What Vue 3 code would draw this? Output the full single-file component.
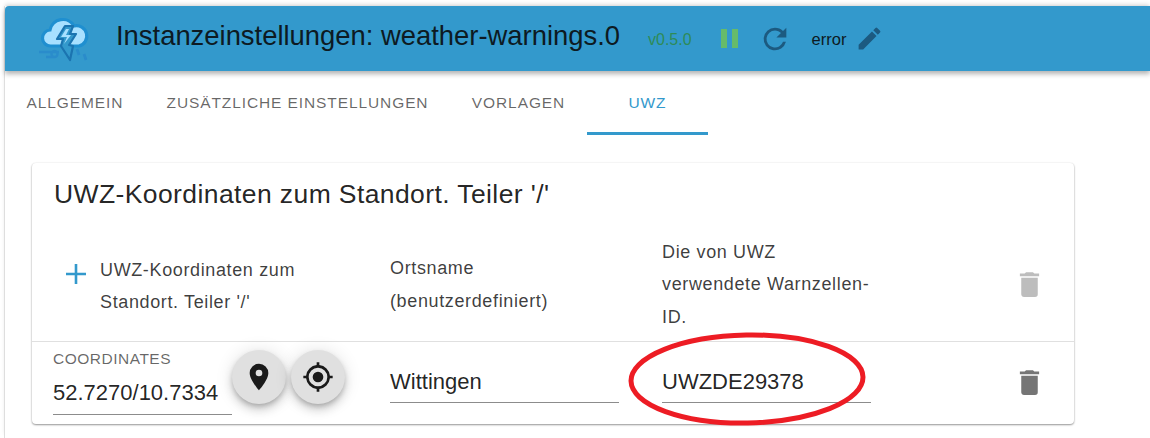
<script setup>
const tabs = [
  { label: 'Allgemein', width: 'tab-a' },
  { label: 'Zusätzliche Einstellungen', width: 'tab-b' },
  { label: 'Vorlagen', width: 'tab-c' },
  { label: 'UWZ', width: 'tab-d', active: true },
]
</script>

<template>
  <div class="page">
    <div class="frame">
      <header class="toolbar">
        <svg class="logo" viewBox="0 0 54 54" width="54" height="54">
          <path d="M12 33a8 8 0 0 1-1-16A13 13 0 0 1 35 13a10 10 0 0 1 5 20z" fill="#a8e0ff" stroke="#1f8fd0" stroke-width="3.2" />
          <path d="M26 13l-8 13h6l-2 7 9 14 3-14-4-1 7-11h-6l3-8z" fill="#3399cc" stroke="#1b74b0" stroke-width="2.2" stroke-linejoin="round" />
          <path d="M27 16l-5 8h6l-3 7 7-9h-5l3-6z" fill="#a8e0ff" />
          <path d="M0 39h20M7 44h9a3 3 0 1 0-1 0" fill="none" stroke="#2a8ccb" stroke-width="2.4" />
          <path d="M38 36l2 6M45 41l2 6" fill="none" stroke="#2a8ccb" stroke-width="2.8" />
        </svg>
        <h1 class="title">Instanzeinstellungen: weather-warnings.0</h1>
        <span class="version">v0.5.0</span>
        <svg class="pause" viewBox="0 0 17 19" width="17" height="19">
          <path d="M0 0h6v19H0zM11 0h6v19h-6z" fill="#66bb6a" />
        </svg>
        <svg class="reload" viewBox="0 0 24 24" width="34" height="34">
          <path d="M17.65 6.35A7.96 7.96 0 0 0 12 4a8 8 0 1 0 7.73 10h-2.08A6 6 0 1 1 12 6c1.66 0 3.14.69 4.22 1.78L13 11h7V4z" fill="#1c5a80" />
        </svg>
        <span class="status">error</span>
        <svg class="edit" viewBox="0 0 24 24" width="29" height="29">
          <path d="M3 17.25V21h3.750L17.810 9.940l-3.750-3.750zM20.710 7.040a1 1 0 0 0 0-1.410l-2.340-2.340a1 1 0 0 0-1.410 0l-1.830 1.830 3.750 3.750z" fill="#1c5a80" />
        </svg>
      </header>

      <nav class="tabs">
        <div v-for="tab in tabs" :key="tab.label" class="tab" :class="[tab.width, { active: tab.active }]">
          {{ tab.label }}
        </div>
      </nav>

      <section class="card">
        <h2 class="card-title">UWZ-Koordinaten zum Standort. Teiler '/'</h2>

        <div class="row head-row">
          <div class="col-one head-one">
            <svg class="plus" viewBox="0 0 20 20" width="20" height="20">
              <path d="M8.700 0h2.600v8.700H20v2.600h-8.700V20H8.700v-8.700H0V8.700h8.700z" fill="#3399cc" />
            </svg>
            <div class="head-text">UWZ-Koordinaten zum Standort. Teiler '/'</div>
          </div>
          <div class="col-two head-text">Ortsname (benutzerdefiniert)</div>
          <div class="col-three head-text">Die von UWZ verwendete Warnzellen-ID.</div>
          <svg class="trash head-trash" viewBox="0 0 24 24" width="33" height="33">
            <path d="M6 19c0 1.1.9 2 2 2h8a2 2 0 0 0 2-2V7H6zM19 4h-3.500l-1-1h-5l-1 1H5v2h14z" fill="#bdbdbd" />
          </svg>
        </div>

        <div class="row data-row">
          <div class="col-one coord-cell">
            <div class="field coord-field">
              <label class="field-label">Coordinates</label>
              <div class="field-value">52.7270/10.7334</div>
            </div>
            <button class="round-btn">
              <svg viewBox="0 0 24 24" width="32" height="32">
                <path d="M12 2a7 7 0 0 0-7 7c0 5.250 7 13 7 13s7-7.750 7-13a7 7 0 0 0-7-7zm0 9.500a2.500 2.500 0 1 1 0-5 2.500 2.500 0 0 1 0 5z" fill="#1a1a1a" />
              </svg>
            </button>
            <button class="round-btn">
              <svg viewBox="0 0 24 24" width="32" height="32">
                <path d="M12 8a4 4 0 1 0 0 8 4 4 0 0 0 0-8zm8.940 3A8.994 8.994 0 0 0 13 3.060V1h-2v2.060A8.994 8.994 0 0 0 3.060 11H1v2h2.060A8.994 8.994 0 0 0 11 20.940V23h2v-2.060A8.994 8.994 0 0 0 20.940 13H23v-2zM12 19a7 7 0 1 1 0-14 7 7 0 0 1 0 14z" fill="#1a1a1a" />
              </svg>
            </button>
          </div>
          <div class="col-two">
            <div class="field plain-field">
              <div class="field-value">Wittingen</div>
            </div>
          </div>
          <div class="col-three">
            <div class="field plain-field">
              <div class="field-value">UWZDE29378</div>
            </div>
          </div>
          <svg class="trash" viewBox="0 0 24 24" width="33" height="33">
            <path d="M6 19c0 1.100.9 2 2 2h8a2 2 0 0 0 2-2V7H6zM19 4h-3.500l-1-1h-5l-1 1H5v2h14z" fill="#757575" />
          </svg>
        </div>
      </section>
    </div>

    <svg class="marker" viewBox="0 0 250 104" width="250" height="104">
      <ellipse cx="125" cy="52" rx="116" ry="44" transform="rotate(-1 125 52)" fill="none" stroke="#ed1c24" stroke-width="5" />
    </svg>
  </div>
</template>

<style scoped>
.page {
  position: relative;
  width: 1150px;
  height: 438px;
  overflow: hidden;
  background: #fff;
  font-family: "Liberation Sans", Arial, sans-serif;
  color: rgba(0, 0, 0, 0.87);
}

.frame {
  margin: 6px 0 0 4px;
  height: 432px;
  border-left: 1px solid #dedede;
  box-shadow: 0 -3px 4px -1px rgba(0, 0, 0, 0.12);
}

.toolbar {
  display: flex;
  align-items: center;
  height: 65px;
  background: #3399cc;
  border-top-left-radius: 4px;
  box-shadow: 0 3px 5px rgba(0, 0, 0, 0.3);
  position: relative;
}

.logo {
  margin-left: 34px;
  margin-top: 3px;
}

.title {
  margin: 0 0 5px 23px;
  font-size: 27.4px;
  font-weight: 400;
  color: #0d1a22;
  white-space: nowrap;
}

.version {
  margin-left: 28px;
  font-size: 16px;
  color: #2e8b57;
  padding-top: 3px;
}

.pause {
  margin-left: 29px;
}

.reload {
  margin-left: 20px;
}

.status {
  margin-left: 20px;
  font-size: 16.500px;
  color: #0d1a22;
  padding-top: 2px;
}

.edit {
  margin-left: 9px;
}

.tabs {
  display: flex;
  height: 64px;
}

.tab {
  box-sizing: border-box;
  height: 64px;
  padding-top: 23px;
  text-align: center;
  font-size: 15.500px;
  letter-spacing: 0.9px;
  text-transform: uppercase;
  color: rgba(0, 0, 0, 0.6);
}

.tab-a {
  width: 140px;
}

.tab-b {
  width: 305px;
}

.tab-c {
  width: 137px;
}

.tab-d {
  width: 121px;
}

.tab.active {
  color: #3399cc;
  border-bottom: 3px solid #3399cc;
}

.card {
  width: 1042px;
  margin: 28px 0 0 27px;
  background: #fff;
  border-radius: 4px;
  box-shadow: 0 1px 2px rgba(0, 0, 0, 0.4), 0 0 2px rgba(0, 0, 0, 0.08);
}

.card-title {
  margin: 0;
  padding: 15px 22px 0;
  height: 65px;
  box-sizing: border-box;
  font-size: 26.500px;
  line-height: 32px;
  letter-spacing: 0.4px;
  font-weight: 400;
}

.row {
  display: flex;
  align-items: center;
}

.head-row {
  height: 113px;
  border-bottom: 1px solid #e0e0e0;
}

.data-row {
  height: 82px;
}

.col-one {
  width: 358px;
  padding-left: 21px;
  box-sizing: border-box;
  flex: none;
}

.col-two {
  width: 272px;
  flex: none;
}

.col-three {
  width: 209px;
  flex: none;
}

.head-one {
  display: flex;
  align-items: center;
  padding-left: 34px;
}

.plus {
  flex: none;
  margin-right: 14px;
  margin-bottom: 22px;
}

.head-text {
  font-size: 18px;
  line-height: 32.500px;
  letter-spacing: 0.63px;
  color: rgba(0, 0, 0, 0.77);
}

.head-one .head-text {
  width: 220px;
  margin-top: 3px;
}

.col-two.head-text {
  padding-right: 60px;
  box-sizing: border-box;
}

.trash {
  margin-left: 142px;
  margin-bottom: 2px;
  flex: none;
}

.head-trash {
  margin-bottom: 0;
}

.coord-cell {
  display: flex;
  align-items: flex-start;
  height: 82px;
}

.field {
  border-bottom: 1px solid #8c8c8c;
  box-sizing: border-box;
}

.coord-field {
  width: 179px;
  height: 73px;
  padding-top: 7px;
  flex: none;
}

.field-label {
  display: block;
  font-size: 15.500px;
  line-height: 20px;
  letter-spacing: 0.5px;
  text-transform: uppercase;
  color: rgba(0, 0, 0, 0.6);
}

.field-value {
  font-size: 22px;
  line-height: 28px;
  color: rgba(0, 0, 0, 0.87);
}

.coord-field .field-value {
  margin-top: 10px;
}

.plain-field {
  height: 44px;
  margin-top: -4px;
  padding-top: 9px;
}

.col-two .plain-field {
  width: 229px;
}

.col-three .plain-field {
  width: 209px;
}

.round-btn {
  width: 54px;
  height: 54px;
  flex: none;
  margin-top: 8px;
  margin-right: 5px;
  padding: 0;
  display: flex;
  align-items: center;
  justify-content: center;
  border: none;
  border-radius: 50%;
  background: #e0e0e0;
  box-shadow: 0 3px 5px -1px rgba(0, 0, 0, 0.2), 0 6px 10px rgba(0, 0, 0, 0.14), 0 1px 18px rgba(0, 0, 0, 0.12);
}

.marker {
  position: absolute;
  left: 622px;
  top: 327px;
}
</style>
